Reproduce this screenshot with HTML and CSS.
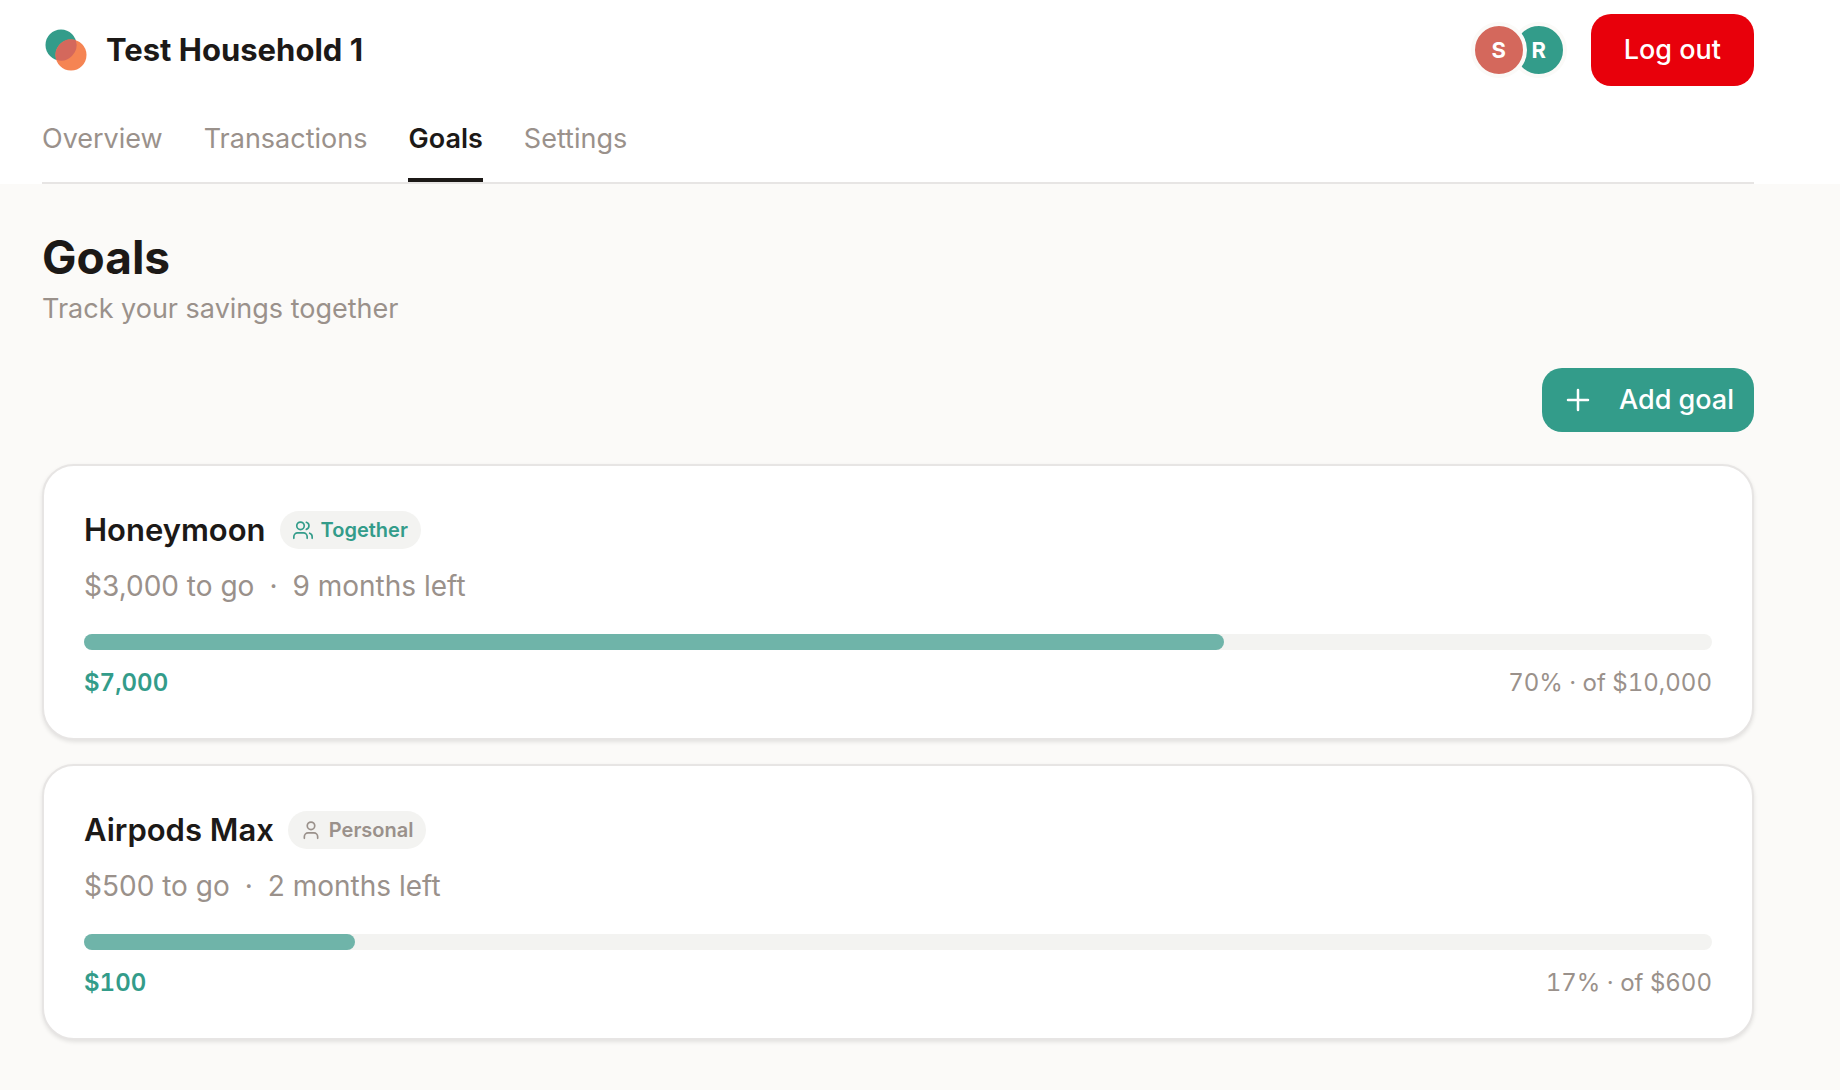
FILE: index.html
```html
<!DOCTYPE html>
<html lang="en">
<head>
    <meta charset="UTF-8">
    <meta name="viewport" content="width=device-width, initial-scale=1.0">
    <title>Goals</title>
    <link rel="stylesheet" href="styles.css">
</head>
<body>
    <header>
        <div class="container">
            <div class="topbar">
                <div class="brand">
                    <svg class="logo" viewBox="0 0 48 48" aria-hidden="true">
                        <circle cx="19" cy="19" r="15.5" fill="#339c8a"/>
                        <circle cx="29" cy="29" r="15.5" fill="#f58453"/>
                        <path d="M33.75 14.25A15.5 15.5 0 0 1 14.25 33.75A15.5 15.5 0 0 1 33.75 14.25Z" fill="#d4685c"/>
                    </svg>
                    <span class="household">Test Household 1</span>
                </div>
                <div class="account">
                    <div class="avatars">
                        <span class="avatar coral">S</span>
                        <span class="avatar teal">R</span>
                    </div>
                    <button class="logout">Log out</button>
                </div>
            </div>
            <nav>
                <a href="#overview">Overview</a>
                <a href="#transactions">Transactions</a>
                <a href="#goals" class="active">Goals</a>
                <a href="#settings">Settings</a>
            </nav>
        </div>
    </header>
    <main class="container">
        <h1>Goals</h1>
        <p class="subtitle">Track your savings together</p>
        <div class="actions">
            <button class="add-goal">
                <svg viewBox="0 0 32 32" aria-hidden="true">
                    <path d="M16 6v20M6 16h20"/>
                </svg>
                Add goal
            </button>
        </div>
        <div class="goals">
            <section class="goal">
                <div class="goal-title">
                    <h2>Honeymoon</h2>
                    <span class="badge together">
                        <svg viewBox="0 0 24 24" aria-hidden="true">
                            <circle cx="9" cy="7" r="4.5"/>
                            <path d="M17 22v-2a4.5 4.5 0 0 0-4.5-4.5h-7A4.5 4.5 0 0 0 1 20v2M16 2.7a4.5 4.5 0 0 1 0 8.6M23 22v-2a4.5 4.5 0 0 0-3-4.2"/>
                        </svg>
                        Together
                    </span>
                </div>
                <p class="meta"><span>$3,000 to go</span><span>·</span><span>9 months left</span></p>
                <div class="bar"><div class="fill" style="width: 70%"></div></div>
                <div class="amounts">
                    <span class="saved">$7,000</span>
                    <span>70% · of $10,000</span>
                </div>
            </section>
            <section class="goal">
                <div class="goal-title">
                    <h2>Airpods Max</h2>
                    <span class="badge">
                        <svg viewBox="0 0 24 24" aria-hidden="true">
                            <circle cx="12" cy="7" r="4.5"/>
                            <path d="M20 22v-2a4.5 4.5 0 0 0-4.5-4.5h-7A4.5 4.5 0 0 0 4 20v2"/>
                        </svg>
                        Personal
                    </span>
                </div>
                <p class="meta"><span>$500 to go</span><span>·</span><span>2 months left</span></p>
                <div class="bar"><div class="fill" style="width: 16.67%"></div></div>
                <div class="amounts">
                    <span class="saved">$100</span>
                    <span>17% · of $600</span>
                </div>
            </section>
        </div>
    </main>
</body>
</html>
```
FILE: styles.css
```css
* {
    box-sizing: border-box;
}
body {
    font-family: Inter, "Liberation Sans", sans-serif;
    font-size: 27px;
    line-height: 40px;
    margin: 0;
    background-color: #fbfaf8;
    color: #1c1917;
}
h1, h2, p {
    margin: 0;
}
button {
    font: inherit;
    font-weight: 500;
    color: #fff;
    border: none;
    border-radius: 20px;
    cursor: pointer;
}
.container {
    padding: 0 86px 0 42px;
}
header {
    background-color: #fff;
    padding-top: 14px;
}
.topbar, .brand, .account, .avatars, .goal-title {
    display: flex;
    align-items: center;
}
.topbar {
    justify-content: space-between;
}
.brand {
    gap: 16px;
}
.logo {
    width: 48px;
    height: 48px;
}
.household {
    font-size: 31px;
    font-weight: 700;
}
.account {
    gap: 24px;
}
.avatar {
    width: 56px;
    height: 56px;
    border: 4px solid #fbfaf8;
    border-radius: 50%;
    color: #fff;
    font-size: 22px;
    font-weight: 700;
    line-height: 48px;
    text-align: center;
}
.avatar.coral {
    background-color: #d4685c;
    z-index: 1;
}
.avatar.teal {
    background-color: #339c8a;
    margin-left: -16px;
}
.logout {
    background-color: #e8000b;
    height: 72px;
    padding: 0 33px;
}
nav {
    display: flex;
    gap: 41px;
    margin-top: 33px;
    border-bottom: 2px solid #e7e5e4;
}
nav a {
    color: #9a918b;
    text-decoration: none;
    padding-bottom: 19px;
    border-bottom: 4px solid transparent;
}
nav a.active {
    color: #1c1917;
    font-weight: 600;
    border-bottom-color: #1c1917;
}
h1 {
    font-size: 46px;
    font-weight: 700;
    line-height: 56px;
    padding-top: 45px;
}
.subtitle {
    color: #9a918b;
    padding-top: 4px;
}
.actions {
    display: flex;
    justify-content: flex-end;
    margin: 39px 0 32px;
}
.add-goal {
    display: flex;
    align-items: center;
    gap: 25px;
    height: 64px;
    padding: 0 20px;
    background-color: #339c8a;
}
.add-goal svg {
    width: 32px;
    height: 32px;
    stroke: #fff;
    stroke-width: 2.5;
    stroke-linecap: round;
}
.goals {
    display: grid;
    gap: 24px;
    margin-bottom: 48px;
}
.goal {
    background-color: #fff;
    border: 2px solid #e7e5e4;
    border-radius: 32px;
    box-shadow: 0 2px 4px rgba(0, 0, 0, 0.1);
    padding: 44px 40px 37px;
}
.goal-title {
    gap: 14px;
}
h2 {
    font-size: 31px;
    font-weight: 600;
    line-height: 40px;
}
.badge {
    display: flex;
    align-items: center;
    gap: 8px;
    height: 38px;
    padding: 0 13px;
    border-radius: 19px;
    background-color: #f3f3f1;
    color: #9a918b;
    font-size: 20px;
    font-weight: 600;
}
.badge svg {
    width: 20px;
    height: 20px;
    fill: none;
    stroke: currentColor;
    stroke-width: 2;
    stroke-linecap: round;
}
.badge.together {
    color: #339c8a;
}
.meta {
    display: flex;
    gap: 15px;
    color: #9a918b;
    font-size: 28px;
    padding-top: 16px;
}
.bar {
    height: 16px;
    margin: 28px 0 15px;
    border-radius: 8px;
    background-color: #f3f3f1;
}
.fill {
    height: 16px;
    border-radius: 8px;
    background-color: #6fb4a9;
}
.amounts {
    display: flex;
    justify-content: space-between;
    color: #9a918b;
    font-size: 24px;
    font-variant-numeric: tabular-nums;
    line-height: 36px;
}
.saved {
    color: #339c8a;
    font-weight: 600;
}
```
